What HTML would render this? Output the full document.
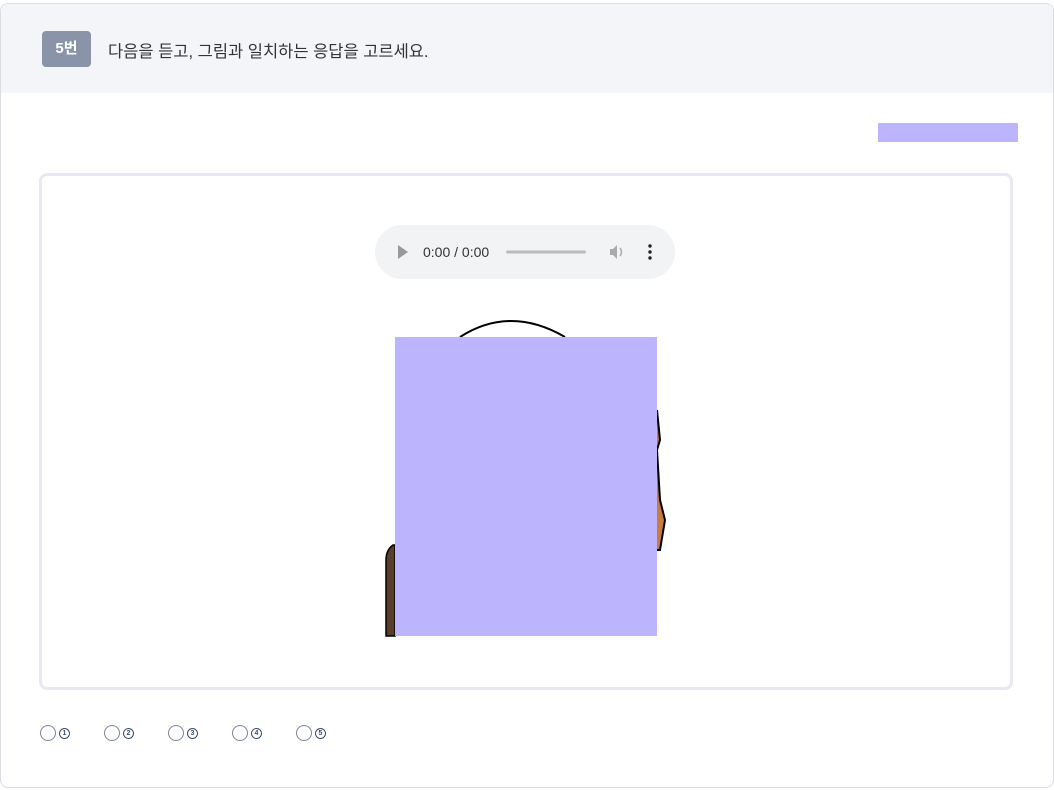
<!DOCTYPE html>
<html><head><meta charset="utf-8"><style>
body{margin:0;background:#fff;font-family:"Liberation Sans","Noto Sans CJK KR",sans-serif;}
.wrap{position:absolute;left:0;top:3px;width:1052px;height:783px;border:1px solid #dcdde3;border-radius:8px;overflow:hidden;}
.hdr{position:absolute;left:0;top:0;width:100%;height:89px;background:#f4f5f9;}
.badge{position:absolute;left:41px;top:27px;width:49px;height:36px;background:#8a94a8;border-radius:4px;color:#fff;font-weight:bold;font-size:15px;line-height:36px;text-align:center;}
.q{position:absolute;left:107px;top:34px;font-size:16.5px;color:#333;}
.tag{position:absolute;left:877px;top:119px;width:140px;height:19px;background:#bcb4fd;}
.box{position:absolute;left:39px;top:173px;width:968px;height:511px;border:3px solid #e9e8f1;border-radius:8px;}
.audio{position:absolute;left:375px;top:225px;width:300px;height:54px;background:#f1f3f4;border-radius:27px;}
.opt{position:absolute;top:725px;font-size:11px;color:#3a4a6b;}
.opt span.c{display:inline-block;width:14px;height:14px;border:1px solid #7a8499;border-radius:50%;vertical-align:middle;}
.opt span.n{display:inline-block;width:9px;height:9px;border:1.5px solid #3a4a6b;border-radius:50%;font-size:7px;line-height:9px;text-align:center;font-weight:bold;vertical-align:middle;margin-left:3px;}
</style></head><body>
<div class="wrap">
<div class="hdr"><div class="badge">5번</div><div class="q">다음을 듣고, 그림과 일치하는 응답을 고르세요.</div></div>
<div class="tag"></div>
</div>
<div class="box"></div>
<div class="audio">
<svg width="300" height="54" style="position:absolute;left:0;top:0">
<polygon points="23,20 23,34 33,27" fill="#999"/>
<text x="48" y="32" font-size="14" fill="#333" font-family="Liberation Sans">0:00 / 0:00</text>
<rect x="131" y="25.5" width="80" height="3" rx="1.5" fill="#bbb"/>
<polygon points="235,24 238,24 242,20 242,34 238,30 235,30" fill="#aaa"/>
<path d="M245,23 Q248,27 245,31" stroke="#aaa" stroke-width="1.5" fill="none"/>
<circle cx="275" cy="21" r="1.7" fill="#222"/><circle cx="275" cy="27" r="1.7" fill="#222"/><circle cx="275" cy="33" r="1.7" fill="#222"/>
</svg></div>
<svg width="1054" height="790" style="position:absolute;left:0;top:0">
<path d="M460,337 Q510,305 565,337" stroke="#000" stroke-width="2" fill="none"/>
<path d="M393,545 Q386,550 386,560 L386,636 L395,636 L395,545 Z" fill="#5a3e2b" stroke="#000" stroke-width="1.5"/>
<path d="M657,410 L660,440 L657,450 L660,500 L665,520 L660,550 L657,550" stroke="#000" stroke-width="2" fill="#c97a3f"/>
<rect x="395" y="337" width="262" height="299" fill="#bcb4fd"/>
</svg>
<div class="opt" style="left:40px"><span class="c"></span><span class="n">1</span></div>
<div class="opt" style="left:104px"><span class="c"></span><span class="n">2</span></div>
<div class="opt" style="left:168px"><span class="c"></span><span class="n">3</span></div>
<div class="opt" style="left:232px"><span class="c"></span><span class="n">4</span></div>
<div class="opt" style="left:296px"><span class="c"></span><span class="n">5</span></div>
</body></html>
